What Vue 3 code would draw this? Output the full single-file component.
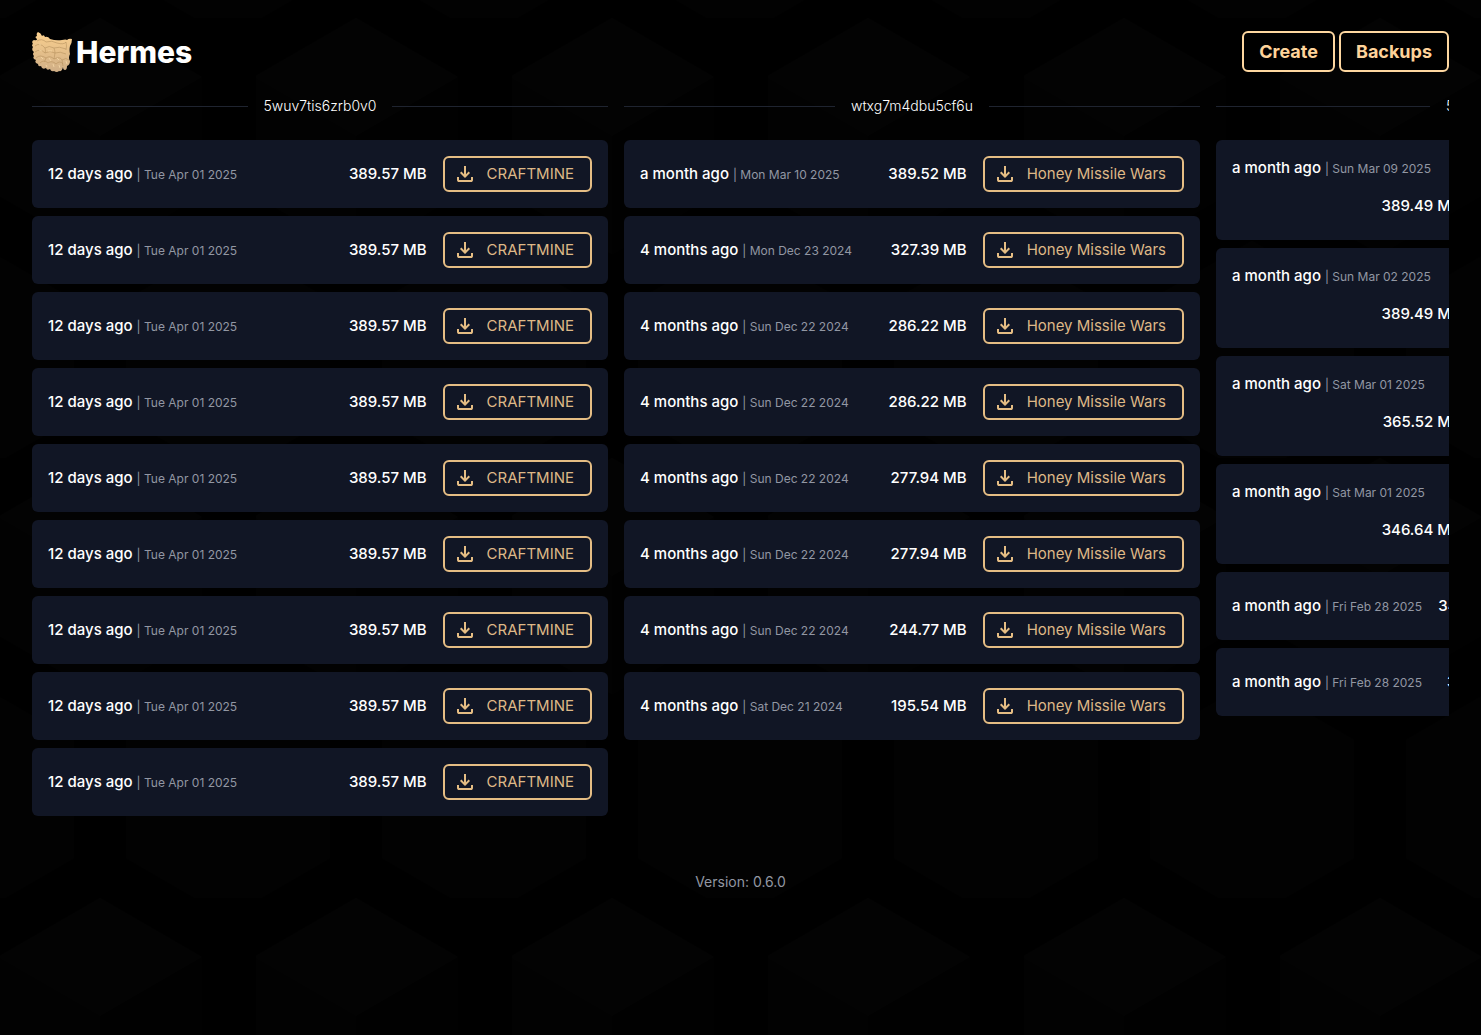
<template>
  <div class="page">
    <svg class="backdrop" aria-hidden="true">
      <defs>
        <pattern id="cubes" width="256" height="440" patternUnits="userSpaceOnUse" patternTransform="translate(0 18)">
          <g id="cube">
            <path d="M100 0 L202 59 L100 118 L-2 59 Z" fill="#030303" />
            <path d="M-2 59 L100 118 V236 L-2 177 Z" fill="#020202" />
            <path d="M202 59 L100 118 V236 L202 177 Z" fill="#010101" />
          </g>
          <path d="M228 223 L330 282 V400 L228 459 L126 400 V282 Z" fill="#020202" />
          <path d="M-28 223 L74 282 V400 L-28 459 L-130 400 V282 Z" fill="#020202" />
        </pattern>
      </defs>
      <rect width="100%" height="100%" fill="url(#cubes)" />
    </svg>

    <header class="header">
      <a href="#" class="brand">
        <svg class="logo" viewBox="0 0 40 40" aria-hidden="true">
          <defs>
            <linearGradient id="wing" x1="0" y1="0" x2="0" y2="1">
              <stop offset="0" stop-color="#fbd08e" />
              <stop offset="1" stop-color="#cfae86" />
            </linearGradient>
          </defs>
          <path
            fill="url(#wing)"
            d="M6 0 Q9 1 10 4 Q12 2 13 5 Q16 4 18 7 Q24 9 30 8 Q34 7 35 8 Q37 6 40 7 Q40 11 38 14 Q37 18 38 22 Q36 26 38 29 Q38 33 35 34 Q35 38 33 38 Q31 38 31 35 Q30 40 27 39 Q25 41 22 39 Q19 40 18 37 Q15 39 14 36 Q10 38 9 34 Q6 35 6 32 Q2 31 4 28 Q0 27 2 24 Q0 22 2 20 Q-1 18 1 15 Q-1 13 1 12 Q-1 9 2 8 Q5 9 5 7 Q2 5 5 4 Q4 1 6 0 Z"
          />
          <path
            class="feathers"
            d="M5 9 Q10 6 14 10 Q20 8 25 11 Q32 13 34 10 M34 10 Q35 14 34 18 M3 14 Q8 10 13 16 Q17 13 22 16 Q27 14 34 17 M3 20 Q8 16 13 21 Q18 18 23 21 Q28 19 34 22 M4 26 Q8 22 14 26 Q18 23 22 27 Q28 24 30 28 Q34 25 37 28 M8 31 Q12 27 16 31 Q20 28 24 32 Q28 28 31 32 M13 16 Q14 19 13 21 M22 16 Q23 19 23 21 M14 26 Q13 29 12 30 M30 28 L31 34 M23 21 L22 27"
          />
          <path class="tips" d="M7 12 L9 13 M7 18 L10 19 M16 19 L20 19 M9 25 L11 27 M17 26 L19 29 M25 26 L27 28 M14 33 L15 35 M21 32 L22 35 M27 33 L28 36 M34 29 L35 32" />
        </svg>
        <h1 class="title">Hermes</h1>
      </a>
      <nav class="nav">
        <button type="button" class="nav-btn">Create</button>
        <button type="button" class="nav-btn">Backups</button>
      </nav>
    </header>

    <main class="columns">
      <section v-for="server in servers" :key="server.id" class="column">
        <h2 class="divider">{{ server.id }}</h2>
        <ul class="backups">
          <li v-for="(backup, index) in server.backups" :key="index" class="backup">
            <div class="when">
              {{ backup.age }} <span class="date">| {{ backup.date }}</span>
            </div>
            <div class="actions">
              <span>{{ backup.size }} MB</span>
              <button type="button" class="download-btn">
                <svg class="icon" viewBox="0 0 24 24" aria-hidden="true">
                  <path d="m12 16l-5-5l1.4-1.45l2.6 2.6V4h2v8.15l2.6-2.6L17 11zm-6 4q-.825 0-1.412-.587T4 18v-3h2v3h12v-3h2v3q0 .825-.587 1.413T18 20z" />
                </svg>
                {{ backup.name }}
              </button>
            </div>
          </li>
        </ul>
      </section>
    </main>

    <footer class="footer">Version: 0.6.0</footer>
  </div>
</template>

<script setup>
import { ref } from 'vue'

const backup = (age, date, size, name) => ({ age, date, size, name })

const servers = ref([
  {
    id: '5wuv7tis6zrb0v0',
    backups: Array.from({ length: 9 }, () =>
      backup('12 days ago', 'Tue Apr 01 2025', '389.57', 'CRAFTMINE')
    )
  },
  {
    id: 'wtxg7m4dbu5cf6u',
    backups: [
      backup('a month ago', 'Mon Mar 10 2025', '389.52', 'Honey Missile Wars'),
      backup('4 months ago', 'Mon Dec 23 2024', '327.39', 'Honey Missile Wars'),
      backup('4 months ago', 'Sun Dec 22 2024', '286.22', 'Honey Missile Wars'),
      backup('4 months ago', 'Sun Dec 22 2024', '286.22', 'Honey Missile Wars'),
      backup('4 months ago', 'Sun Dec 22 2024', '277.94', 'Honey Missile Wars'),
      backup('4 months ago', 'Sun Dec 22 2024', '277.94', 'Honey Missile Wars'),
      backup('4 months ago', 'Sun Dec 22 2024', '244.77', 'Honey Missile Wars'),
      backup('4 months ago', 'Sat Dec 21 2024', '195.54', 'Honey Missile Wars')
    ]
  },
  {
    id: '5xwt7vim6zcf0v0',
    backups: [
      backup('a month ago', 'Sun Mar 09 2025', '389.49', 'Honey Missile Wars Snapshot 2.0'),
      backup('a month ago', 'Sun Mar 02 2025', '389.49', 'Honey Missile Wars Snapshot 2.0'),
      backup('a month ago', 'Sat Mar 01 2025', '365.52', 'Honey Missile Wars Snapshot 2.0'),
      backup('a month ago', 'Sat Mar 01 2025', '346.64', 'Honey Missile Wars Snapshot 2.0'),
      backup('a month ago', 'Fri Feb 28 2025', '346.64', 'Honey Missile Wars 2025'),
      backup('a month ago', 'Fri Feb 28 2025', '314.17', 'Honey Missile Wars 2025')
    ]
  }
])
</script>

<style>
body {
  background: #000;
}
</style>

<style scoped>
.page {
  position: relative;
  box-sizing: border-box;
  min-height: 100vh;
  padding: 31px 32px;
  color: #fff;
  font-family: Inter, "Liberation Sans", sans-serif;
  font-size: 15px;
  font-weight: 500;
  line-height: 24px;
}

.backdrop {
  position: absolute;
  inset: 0;
  z-index: -1;
  width: 100%;
  height: 100%;
}

.header {
  display: flex;
  align-items: center;
  justify-content: space-between;
}

.brand {
  display: flex;
  align-items: center;
  gap: 4px;
  color: #fff;
  text-decoration: none;
}

.logo {
  width: 40px;
  height: 40px;
}

.feathers,
.tips {
  fill: none;
  stroke: #b8935f;
  stroke-width: 1;
  opacity: 0.6;
}

.tips {
  stroke: #ffe2b0;
}

.title {
  margin: 0;
  font-size: 30px;
  font-weight: 800;
  line-height: 40px;
}

.nav {
  display: flex;
  gap: 4px;
}

.nav-btn {
  padding: 6px 15px;
  border: 2px solid #fed7a0;
  border-radius: 6px;
  background: #000;
  color: #fed39a;
  font: inherit;
  font-size: 18px;
  font-weight: 700;
  line-height: 25px;
  cursor: pointer;
}

.columns {
  display: flex;
  gap: 16px;
  margin-top: 22px;
  overflow: hidden;
}

.column {
  flex: 0 0 576px;
}

.divider {
  display: flex;
  align-items: center;
  gap: 16px;
  margin: 0 0 22px;
  font-size: 14px;
  font-weight: 300;
  line-height: 24px;
}

.divider::before,
.divider::after {
  content: "";
  flex: 1;
  height: 1px;
  background: #1f2430;
}

.backups {
  display: flex;
  flex-direction: column;
  gap: 8px;
  margin: 0;
  padding: 0;
  list-style: none;
}

.backup {
  display: flex;
  flex-wrap: wrap;
  align-items: center;
  justify-content: space-between;
  gap: 8px;
  padding: 16px;
  border-radius: 6px;
  background: #111625;
}

.date {
  color: #9297a3;
  font-size: 12px;
  font-weight: 400;
  line-height: 16px;
}

.actions {
  display: flex;
  align-items: center;
  gap: 16px;
  margin-left: auto;
}

.download-btn {
  display: flex;
  align-items: center;
  gap: 10px;
  padding: 4px 16px 4px 8px;
  border: 2px solid #e5bd84;
  border-radius: 6px;
  background: transparent;
  color: #deb887;
  font: inherit;
  font-weight: 400;
  line-height: 24px;
  cursor: pointer;
}

.icon {
  width: 24px;
  height: 24px;
  fill: #e5bd84;
}

.footer {
  margin-top: 54px;
  color: #9297a3;
  font-size: 14px;
  font-weight: 400;
  text-align: center;
}
</style>
